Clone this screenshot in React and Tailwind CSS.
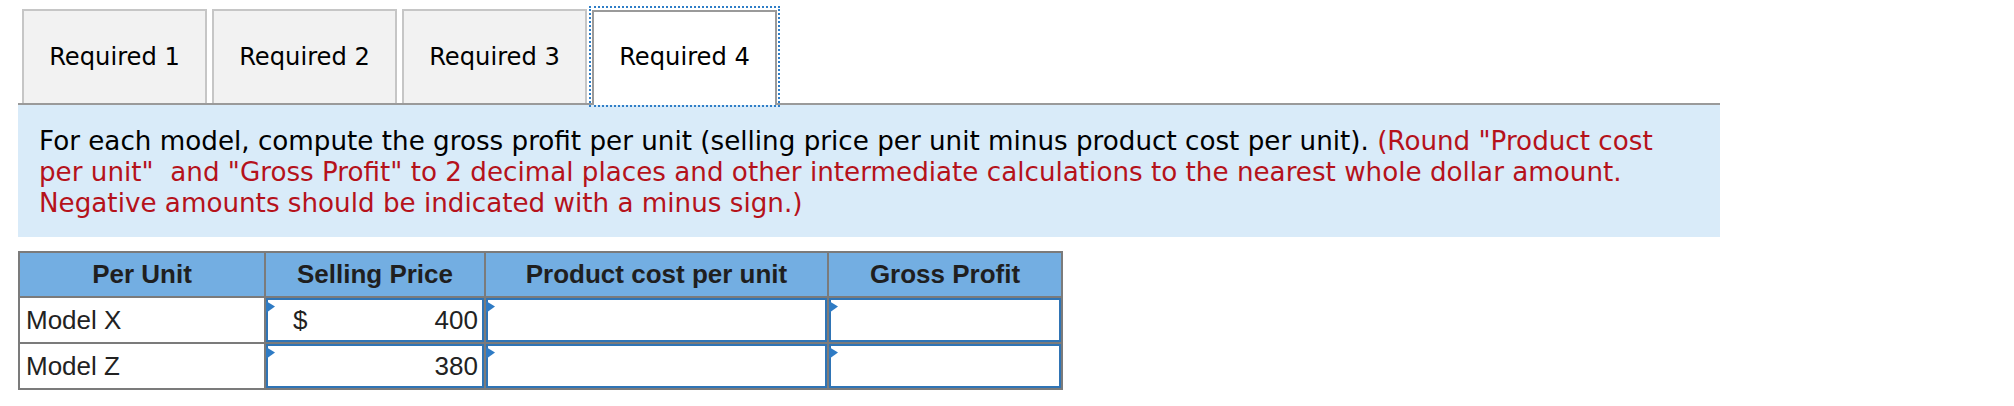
import React from "react";

function Tri() {
  return (
    <svg
      className="absolute -left-[2px] top-[1px]"
      width="9"
      height="12"
      viewBox="0 0 9 12"
    >
      <polygon points="0,0 9,5.5 0,12" fill="#2f7bc4" />
    </svg>
  );
}

function InputCell({ dollar, value }) {
  return (
    <div className="bg-white">
      <div className="relative h-full w-full border-2 border-[#2f74b5] flex items-center justify-between pl-[25px] pr-[4px] text-[26px] text-[#222]">
        <Tri />
        <span>{dollar ? "$" : ""}</span>
        <span>{value}</span>
      </div>
    </div>
  );
}

function Head({ children }) {
  return (
    <div className="bg-[#73aee2] flex items-center justify-center font-bold text-[26px] text-[#1f1f1f]">
      {children}
    </div>
  );
}

function Label({ children }) {
  return (
    <div className="bg-white flex items-center pl-[6px] text-[26px] text-[#222]">
      {children}
    </div>
  );
}

export default function App() {
  const tabs = ["Required 1", "Required 2", "Required 3"];
  return (
    <div className="w-[2014px] h-[406px] bg-white">
      <div className="ml-[18px] w-[1702px]">
        <div className="flex items-end gap-[5px] pt-[9px] pl-[4px] font-['DejaVu_Sans',sans-serif] text-[24.2px] text-black">
          {tabs.map((t) => (
            <div
              key={t}
              className="w-[185px] h-[94px] border-2 border-b-0 border-[#c6c6c6] bg-[#f2f2f2] flex items-center justify-center"
            >
              {t}
            </div>
          ))}
          <div className="relative z-10 -mb-[2px] w-[185px] h-[95px] border-2 border-b-0 border-[#9a9a9a] bg-white flex items-center justify-center pb-[2px]">
            Required 4
            <span className="absolute -left-[5px] -right-[5px] -top-[6px] -bottom-[2px] border-2 border-dotted border-[#2f7ec7]" />
          </div>
        </div>
        <div className="border-t-2 border-[#9a9a9a] bg-[#d9ebf9] pt-[21px] pb-[18px] pl-[21px] pr-[20px] font-['DejaVu_Sans',sans-serif] text-[26.2px] leading-[31px] whitespace-nowrap">
          <span className="text-black">
            For each model, compute the gross profit per unit (selling price per unit minus product cost per unit).{" "}
          </span>
          <span className="text-[#b5121b]">
            (Round "Product cost
            <br />
            per unit"{"\u00a0"} and "Gross Profit" to 2 decimal places and other intermediate calculations to the nearest whole dollar amount.
            <br />
            Negative amounts should be indicated with a minus sign.)
          </span>
        </div>
        <div className="mt-[14px] inline-grid grid-cols-[244px_218px_341px_232px] grid-rows-[43px_44px_44px] gap-[2px] p-[2px] bg-[#7b7b7b] font-['Liberation_Sans',Arial,sans-serif]">
          <Head>Per Unit</Head>
          <Head>Selling Price</Head>
          <Head>Product cost per unit</Head>
          <Head>Gross Profit</Head>
          <Label>Model X</Label>
          <InputCell dollar value="400" />
          <InputCell />
          <InputCell />
          <Label>Model Z</Label>
          <InputCell value="380" />
          <InputCell />
          <InputCell />
        </div>
      </div>
    </div>
  );
}
